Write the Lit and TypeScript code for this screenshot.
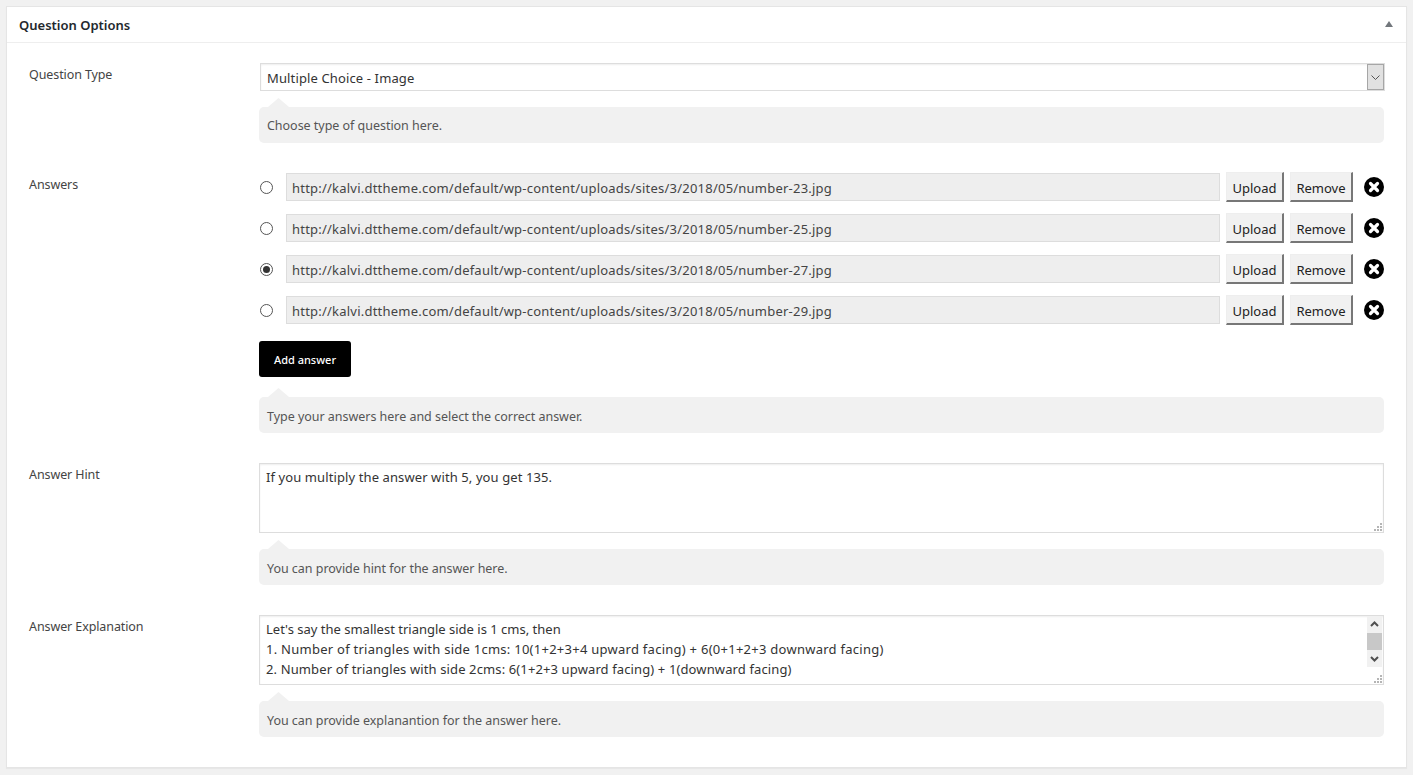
import { LitElement, html, css, svg } from "lit";
import { customElement } from "lit/decorators.js";

const urls = [23, 25, 27, 29].map(
  (n) => `http://kalvi.dttheme.com/default/wp-content/uploads/sites/3/2018/05/number-${n}.jpg`
);

const grip = svg`<svg class="grip" width="9" height="9" viewBox="0 0 9 9"><g fill="#b5b5b5"><rect x="6" y="0" width="2" height="2"/><rect x="3" y="3" width="2" height="2"/><rect x="6" y="3" width="2" height="2"/><rect x="0" y="6" width="2" height="2"/><rect x="3" y="6" width="2" height="2"/><rect x="6" y="6" width="2" height="2"/></g></svg>`;

@customElement("app-root")
export class AppRoot extends LitElement {
  static styles = css`
    :host {
      display: block;
      box-sizing: border-box;
      height: 775px;
      padding: 6px;
      background: #f1f1f1;
      font-family: "Noto Sans", "Open Sans", sans-serif;
      font-size: 12.5px;
      line-height: 20px;
      color: #444;
      overflow: hidden;
    }
    * { box-sizing: border-box; }
    .card {
      background: #fff;
      border: 1px solid #e5e5e5;
      box-shadow: 0 1px 1px rgba(0, 0, 0, 0.04);
      height: 762px;
    }
    .head {
      height: 36px;
      border-bottom: 1px solid #eee;
      padding: 1px 13px 0 12px;
      display: flex;
      align-items: center;
      justify-content: space-between;
    }
    .title {
      font-size: 13px;
      font-weight: 600;
      color: #23282d;
    }
    .caret {
      width: 0;
      height: 0;
      border-left: 4.5px solid transparent;
      border-right: 4.5px solid transparent;
      border-bottom: 6px solid #72777c;
      margin-top: -3px;
    }
    .body {
      padding: 20px 22px 0;
      display: flex;
      flex-direction: column;
      gap: 30px;
    }
    .row {
      display: grid;
      grid-template-columns: 230px 1fr;
    }
    .label { padding-top: 2px; color: #444; letter-spacing: -0.1px; }
    .field { min-width: 0; display: flex; flex-direction: column; }
    .select {
      height: 28px;
      margin: 0 -1px 0 1px;
      border: 1px solid #ddd;
      box-shadow: inset 0 1px 2px rgba(0, 0, 0, 0.07);
      display: flex;
      align-items: center;
      justify-content: space-between;
      padding-left: 6px;
      font-size: 13px;
      letter-spacing: 0.13px;
      color: #333;
    }
    .select-text { padding-top: 1px; }
    .drop {
      width: 17px;
      height: 26px;
      border: 1px solid #a6a6a6;
      background: #e1e1e1;
      display: flex;
      align-items: center;
      justify-content: center;
    }
    .tip {
      position: relative;
      margin-top: 16px;
      height: 36px;
      padding: 10px 8px 0;
      background: #f1f1f1;
      border-radius: 5px;
      color: #555;
      letter-spacing: -0.03px;
    }
    .row:first-child .tip { padding-top: 9px; }
    .tip::before {
      content: "";
      position: absolute;
      left: 9px;
      top: -9px;
      width: 21px;
      height: 9px;
      background: #f1f1f1;
      clip-path: polygon(0 100%, 50% 0, 100% 100%);
    }
    .answers { display: flex; flex-direction: column; gap: 13px; }
    .answer {
      display: flex;
      align-items: center;
      height: 28px;
    }
    .radio {
      appearance: none;
      flex: none;
      width: 13px;
      height: 13px;
      margin: 0 13px 0 1px;
      border: 1px solid #555;
      border-radius: 50%;
      background: #fff;
      position: relative;
    }
    .radio:checked::after {
      content: "";
      position: absolute;
      inset: 2px;
      border-radius: 50%;
      background: #333;
    }
    .url {
      flex: 1;
      min-width: 0;
      height: 28px;
      padding: 2px 5px 0;
      border: 1px solid #ddd;
      background: #eee;
      font: inherit;
      font-size: 13px;
      letter-spacing: 0.22px;
      color: #444;
      outline: none;
    }
    .btn {
      flex: none;
      height: 30px;
      padding: 2px 0 0;
      border: 1px solid #eee;
      border-right: 2px solid #777;
      border-bottom: 2px solid #777;
      background: #f1f1f1;
      font: inherit;
      font-size: 13px;
      color: #222;
    }
    .upload { width: 58px; margin-left: 6px; }
    .remove { width: 63px; margin-left: 6px; }
    .del { flex: none; margin-left: 11px; display: block; }
    .add {
      align-self: flex-start;
      margin-top: 17px;
      width: 92px;
      height: 36px;
      border: 0;
      border-radius: 3px;
      background: #000;
      color: #fff;
      font: inherit;
      font-size: 11px;
      font-weight: 500;
      padding: 1px 0 0;
    }
    .add + .tip { margin-top: 20px; }
    .area {
      position: relative;
      height: 70px;
      border: 1px solid #ddd;
      box-shadow: inset 0 1px 2px rgba(0, 0, 0, 0.07);
      padding: 3px 6px;
      font-size: 13px;
      color: #333;
      overflow: hidden;
      white-space: nowrap;
    }
    .hint { letter-spacing: 0.1px; }
    .l2 { letter-spacing: 0.26px; }
    .l3 { letter-spacing: 0.12px; }
    .grip { position: absolute; right: 0; bottom: 0; }
    .bar {
      position: absolute;
      right: 1px;
      top: 0;
      width: 15px;
      height: 51px;
      background: #f1f1f1;
      display: flex;
      flex-direction: column;
      justify-content: space-between;
      align-items: center;
    }
    .thumb {
      position: absolute;
      left: 0;
      top: 17px;
      width: 15px;
      height: 17px;
      background: #c8c8c8;
    }
    .chev { display: block; margin: 5px 0; }
  `;

  private tip(text: string) {
    return html`<div class="tip">${text}</div>`;
  }

  render() {
    return html`
      <div class="card">
        <div class="head">
          <div class="title">Question Options</div>
          <div class="caret"></div>
        </div>
        <div class="body">
          <div class="row">
            <div class="label">Question Type</div>
            <div class="field">
              <div class="select">
                <span class="select-text">Multiple Choice - Image</span>
                <span class="drop">
                  <svg width="9" height="5" viewBox="0 0 9 5"><path d="M0.5 0.5 L4.5 4.5 L8.5 0.5" fill="none" stroke="#555" stroke-width="1"/></svg>
                </span>
              </div>
              ${this.tip("Choose type of question here.")}
            </div>
          </div>
          <div class="row">
            <div class="label">Answers</div>
            <div class="field">
              <div class="answers">
                ${urls.map(
                  (u, i) => html`
                    <div class="answer">
                      <input class="radio" type="radio" name="correct" ?checked=${i === 2} />
                      <input class="url" type="text" readonly .value=${u} />
                      <button class="btn upload">Upload</button>
                      <button class="btn remove">Remove</button>
                      <svg class="del" width="20" height="20" viewBox="0 0 20 20">
                        <circle cx="10" cy="10" r="10" fill="#000"/>
                        <path d="M6.5 6.5 L13.5 13.5 M13.5 6.5 L6.5 13.5" stroke="#fff" stroke-width="3.2" stroke-linecap="round"/>
                      </svg>
                    </div>
                  `
                )}
              </div>
              <button class="add">Add answer</button>
              ${this.tip("Type your answers here and select the correct answer.")}
            </div>
          </div>
          <div class="row">
            <div class="label">Answer Hint</div>
            <div class="field">
              <div class="area hint">If you multiply the answer with 5, you get 135.${grip}</div>
              ${this.tip("You can provide hint for the answer here.")}
            </div>
          </div>
          <div class="row">
            <div class="label">Answer Explanation</div>
            <div class="field">
              <div class="area">
                <div>Let's say the smallest triangle side is 1 cms, then</div>
                <div class="l2">1. Number of triangles with side 1cms: 10(1+2+3+4 upward facing) + 6(0+1+2+3 downward facing)</div>
                <div class="l3">2. Number of triangles with side 2cms: 6(1+2+3 upward facing) + 1(downward facing)</div>
                <div class="bar">
                  <svg class="chev" width="9" height="6" viewBox="0 0 9 6"><path d="M1 5 L4.5 1.5 L8 5" fill="none" stroke="#505050" stroke-width="2"/></svg>
                  <div class="thumb"></div>
                  <svg class="chev" width="9" height="6" viewBox="0 0 9 6"><path d="M1 1 L4.5 4.5 L8 1" fill="none" stroke="#505050" stroke-width="2"/></svg>
                </div>
                ${grip}
              </div>
              ${this.tip("You can provide explanantion for the answer here.")}
            </div>
          </div>
        </div>
      </div>
    `;
  }
}
